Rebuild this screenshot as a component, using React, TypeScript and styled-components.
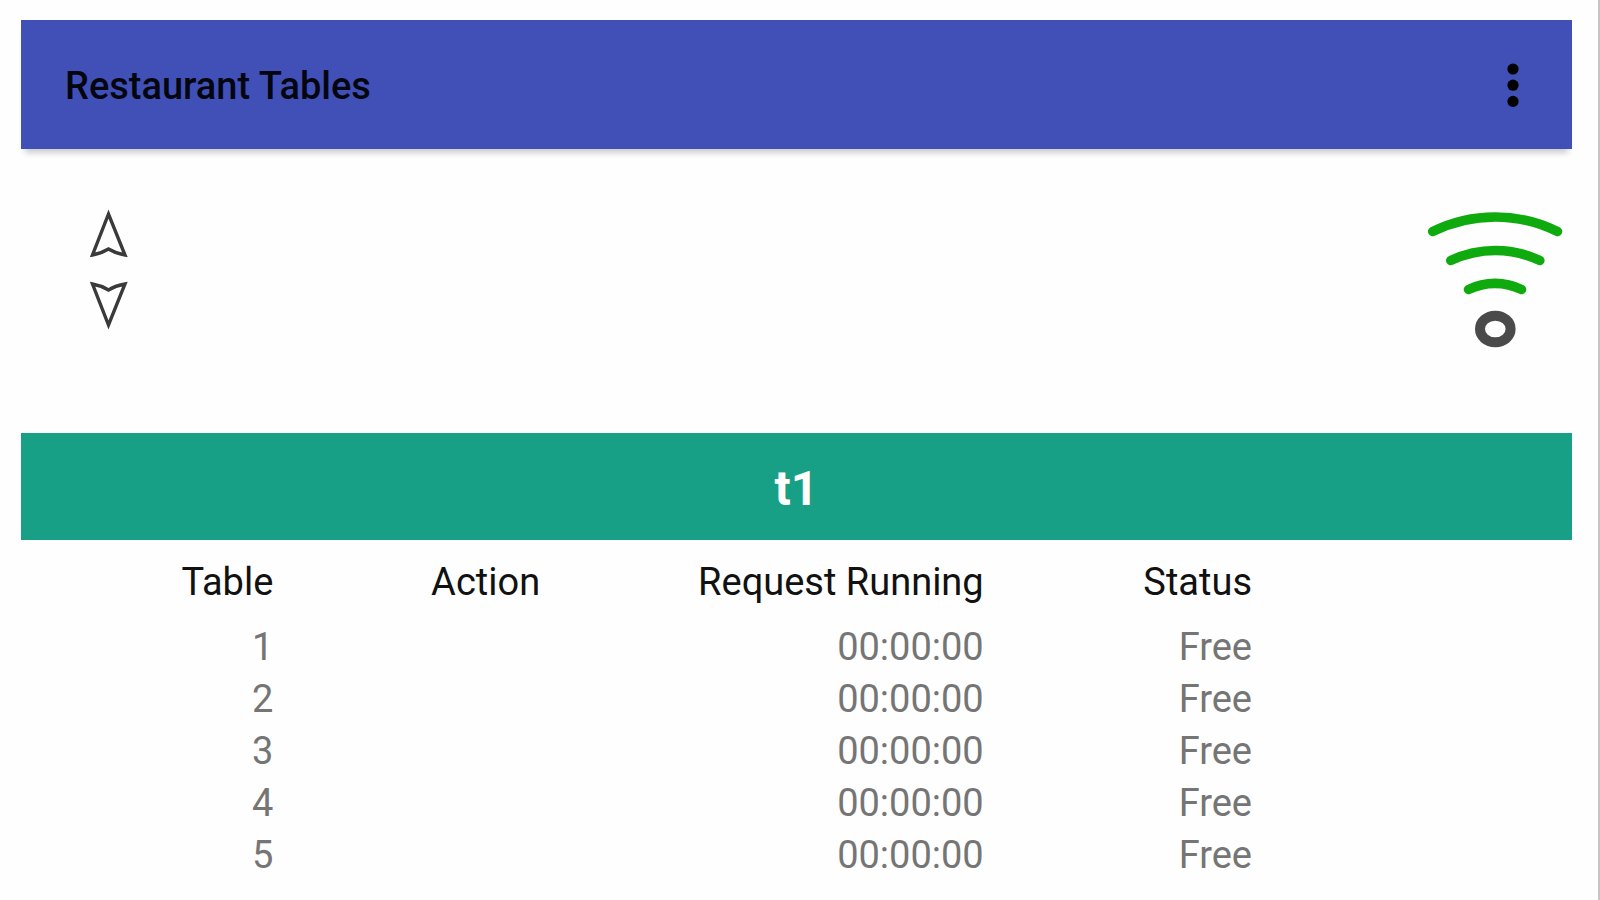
import React from "react";
import styled, { createGlobalStyle } from "styled-components";

const GlobalStyle = createGlobalStyle`
  *, *::before, *::after { box-sizing: border-box; }
  body {
    margin: 0;
    background: #fefefe;
    font-family: Roboto, "Liberation Sans", sans-serif;
    color: #000;
  }
`;

const Page = styled.div`
  min-height: 100vh;
  padding: 20px 26px 0 21px;
  border-right: 2px solid #c6c6c6;
`;

const AppBar = styled.header`
  display: flex;
  align-items: center;
  justify-content: space-between;
  height: 129px;
  padding: 0 34px 0 44px;
  background: #4150b6;
  box-shadow: 0 8px 6px -4px rgba(0, 0, 0, 0.2);
`;

const Title = styled.h1`
  margin: 0;
  padding-top: 2px;
  font-size: 38px;
  line-height: 44px;
  font-weight: 500;
  color: #04060f;
`;

const IconButton = styled.button`
  display: block;
  padding: 0;
  border: 0;
  background: transparent;
  cursor: pointer;

  svg { display: block; }
`;

const Controls = styled.section`
  display: flex;
  align-items: flex-start;
  justify-content: space-between;
  height: 284px;
  padding: 56px 8px 0 64px;
`;

const Sorter = styled.div`
  display: flex;
  flex-direction: column;
  gap: 22px;
`;

const Signal = styled.svg`
  display: block;
`;

const GroupName = styled.h2`
  display: flex;
  align-items: center;
  justify-content: center;
  height: 107px;
  margin: 0;
  padding-top: 4px;
  background: #17a085;
  color: #fff;
  font-size: 48px;
  line-height: 56px;
  font-weight: 700;
`;

const Grid = styled.table`
  width: 100%;
  border-collapse: collapse;
  table-layout: fixed;
  font-size: 38px;
  line-height: 52px;
  text-align: right;
`;

const Column = styled.col<{ $share?: string }>`
  width: ${({ $share }) => $share ?? "auto"};
`;

const HeadCell = styled.th`
  padding: 16px 2px 13px 0;
  font-weight: 400;
  text-align: right;
  white-space: nowrap;
  color: #111;
`;

const Cell = styled.td`
  padding: 0 2px 0 0;
  color: #757575;
`;

const tables = [1, 2, 3, 4, 5].map((id) => ({
  id,
  action: "",
  running: "00:00:00",
  status: "Free",
}));

const ArrowUp = () => (
  <svg width="46" height="52" viewBox="0 0 46 52" fill="none" stroke="#3a3a3a" strokeWidth="3.4" aria-hidden="true">
    <path d="M23.5 9 L7.5 50 Q16 48.500 23.500 44 Q31 48.500 40 50 Z" />
  </svg>
);

const ArrowDown = () => (
  <svg width="46" height="52" viewBox="0 0 46 52" fill="none" stroke="#3a3a3a" strokeWidth="3.4" aria-hidden="true">
    <path d="M23.5 46 L7.500 5 Q16 6.500 23.500 11 Q31 6.500 40 5 Z" />
  </svg>
);

export default function App() {
  return (
    <>
      <GlobalStyle />
      <Page>
        <AppBar>
          <Title>Restaurant Tables</Title>
          <IconButton type="button" aria-label="More options">
            <svg width="50" height="56" viewBox="0 0 50 56" fill="#000" aria-hidden="true">
              <circle cx="25" cy="12" r="5.6" />
              <circle cx="25" cy="28.2" r="5.6" />
              <circle cx="25" cy="44.4" r="5.6" />
            </svg>
          </IconButton>
        </AppBar>

        <main>
          <Controls>
            <Sorter>
              <IconButton type="button" aria-label="Move up">
                <ArrowUp />
              </IconButton>
              <IconButton type="button" aria-label="Move down">
                <ArrowDown />
              </IconButton>
            </Sorter>
            <Signal width="138" height="148" viewBox="0 0 138 148" fill="none" role="img" aria-label="Connected">
              <g stroke="#0eaa0e" strokeWidth="9.6" strokeLinecap="round">
                <path d="M6.700 26.500 A141 141 0 0 1 131.500 26.500" />
                <path d="M24.800 55.500 A104 104 0 0 1 113.800 55.500" />
                <path d="M42.500 84.500 A60 60 0 0 1 95.500 84.500" />
              </g>
              <ellipse cx="69.300" cy="124" rx="15.300" ry="13.300" stroke="#4a4a4a" strokeWidth="10" />
            </Signal>
          </Controls>

          <GroupName>t1</GroupName>

          <Grid>
            <colgroup>
              <Column $share="16.4%" />
              <Column $share="17.2%" />
              <Column $share="28.6%" />
              <Column $share="17.3%" />
              <Column />
            </colgroup>
            <thead>
              <tr>
                <HeadCell scope="col">Table</HeadCell>
                <HeadCell scope="col">Action</HeadCell>
                <HeadCell scope="col">Request Running</HeadCell>
                <HeadCell scope="col">Status</HeadCell>
                <td />
              </tr>
            </thead>
            <tbody>
              {tables.map((row) => (
                <tr key={row.id}>
                  <Cell>{row.id}</Cell>
                  <Cell>{row.action}</Cell>
                  <Cell>{row.running}</Cell>
                  <Cell>{row.status}</Cell>
                  <td />
                </tr>
              ))}
            </tbody>
          </Grid>
        </main>
      </Page>
    </>
  );
}
